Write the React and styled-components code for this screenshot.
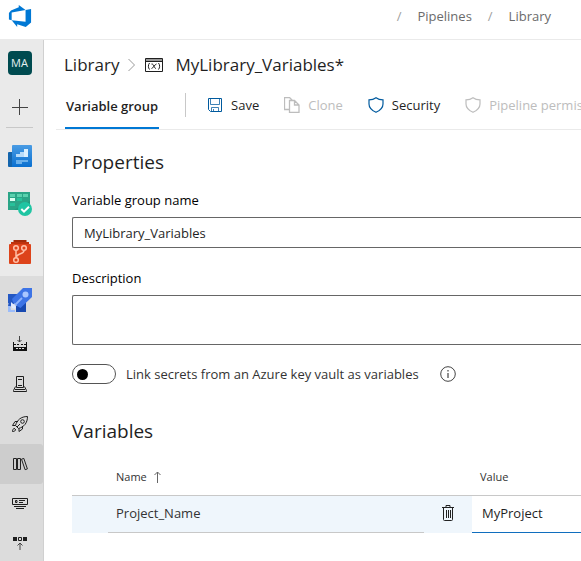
import React, { useState } from "react";
import styled, { createGlobalStyle, css } from "styled-components";

const GlobalStyle = createGlobalStyle`
  *, *::before, *::after { box-sizing: border-box; }
  html, body, #root { height: 100%; }
  body {
    margin: 0;
    overflow: hidden;
    background: #fff;
    color: #1f1f1f;
    font: 13px/20px "Open Sans", "Noto Sans", sans-serif;
  }
  button, input, textarea { font: inherit; color: inherit; }
  svg { display: block; flex: none; }
`;

const Page = styled.div`
  display: flex;
  flex-direction: column;
  height: 100%;
`;

const TopBar = styled.header`
  display: flex;
  align-items: center;
  justify-content: space-between;
  flex: none;
  height: 40px;
  padding: 0 30px 8px 8px;
  border-bottom: 1px solid #eaeaea;
`;

const HomeLink = styled.a`
  display: block;
`;

const Trail = styled.nav`
  display: flex;
  gap: 16px;
  color: #a0a0a0;
`;

const TrailLink = styled.a`
  color: #6b6b6b;
  text-decoration: none;
`;

const Body = styled.div`
  display: flex;
  flex: 1;
  min-height: 0;
`;

const Sidebar = styled.nav`
  display: flex;
  flex-direction: column;
  flex: none;
  width: 44px;
  overflow: hidden;
  background: #eaeaea;
  border-right: 1px solid #d0d0d0;
`;

const SideTop = styled.div`
  display: flex;
  flex-direction: column;
  align-items: center;
  margin: 0 10px 4px 6px;
  padding-top: 11px;
  border-bottom: 1px solid #c8c8c8;
`;

const ProjectBadge = styled.a`
  width: 24px;
  border-radius: 4px;
  background: #004b50;
  color: #e6f0f0;
  font-size: 11px;
  line-height: 24px;
  text-align: center;
  text-decoration: none;
`;

const AddButton = styled.button`
  display: grid;
  place-items: center;
  width: 24px;
  height: 41px;
  margin-top: 11px;
  padding: 0;
  border: 0;
  background: none;
`;

const SideItem = styled.a`
  display: grid;
  place-items: center;
  flex: none;
  height: ${(p) => (p.$sub ? 40 : 48)}px;
  padding-right: 4px;
  border-radius: 0 3px 3px 0;
  background: ${(p) => (p.$selected ? "#cdcdcd" : "transparent")};
`;

const SideGroup = styled.div`
  flex: 1 0 auto;
  background: #dcdcdc;
`;

const Main = styled.main`
  flex: 1;
  min-width: 0;
  overflow: hidden;
`;

const TitleRow = styled.div`
  display: flex;
  align-items: center;
  gap: 9px;
  height: 50px;
  padding-left: 20px;
  font-size: 17px;
  line-height: 24px;
  white-space: nowrap;
`;

const TitleLink = styled.a`
  color: inherit;
  text-decoration: none;
`;

const Title = styled.h1`
  margin: 0 0 0 3px;
  font: inherit;
`;

const CommandBar = styled.div`
  display: flex;
  align-items: flex-start;
  height: 40px;
  margin-left: 12px;
  padding-left: 9px;
  border-bottom: 1px solid #eaeaea;
`;

const Tab = styled.button`
  flex: none;
  height: 39px;
  padding: 0 1px 6px;
  border: 0;
  border-bottom: 2px solid #0078d4;
  background: none;
  font-weight: 600;
  line-height: 20px;
`;

const Divider = styled.span`
  flex: none;
  width: 1px;
  height: 24px;
  margin: 3px 13px 0 26px;
  background: #c8c8c8;
`;

const Command = styled.button`
  display: flex;
  align-items: center;
  flex: none;
  gap: 8px;
  height: 30px;
  margin-right: 9px;
  padding: 0 8px;
  border: 0;
  background: none;
  color: #1f1f1f;
  white-space: nowrap;
  svg { color: #005a9e; }
  &:disabled,
  &:disabled svg { color: #bdbdbd; }
`;

const Content = styled.div`
  padding: 20px 0 0 28px;
`;

const Heading = styled.h2`
  margin: 0;
  font-size: 19px;
  font-weight: 400;
  line-height: 24px;
`;

const Field = styled.div`
  display: flex;
  flex-direction: column;
  gap: 7px;
  margin-top: ${(p) => p.$space}px;
`;

const Label = styled.label`
  color: #000;
`;

const boxed = css`
  display: block;
  width: 100%;
  border: 1px solid #666;
  border-right: 0;
  border-radius: 2px 0 0 2px;
  background: #fff;
  outline: 0;
`;

const TextInput = styled.input`
  ${boxed}
  height: 31px;
  padding: 0 11px;
`;

const TextArea = styled.textarea`
  ${boxed}
  height: 50px;
  padding: 6px 11px;
  resize: none;
`;

const ToggleRow = styled.div`
  display: flex;
  align-items: center;
  gap: 10px;
  margin: 19px 0 35px;
  color: #333;
  white-space: nowrap;
`;

const Toggle = styled.input`
  appearance: none;
  display: flex;
  align-items: center;
  justify-content: ${(p) => (p.checked ? "flex-end" : "flex-start")};
  flex: none;
  width: 44px;
  height: 20px;
  margin: 0;
  padding: 0 4px;
  border: 1px solid #555;
  border-radius: 10px;
  &::before {
    content: "";
    width: 11px;
    height: 11px;
    border-radius: 50%;
    background: #000;
  }
`;

const InfoButton = styled.button`
  margin-left: 11px;
  padding: 0;
  border: 0;
  background: none;
`;

const Table = styled.table`
  width: 100%;
  margin-top: 14px;
  border-collapse: separate;
  border-spacing: 0;
  table-layout: fixed;
`;

const Column = styled.col`
  width: ${(p) => p.$width}px;
`;

const HeadCell = styled.th`
  height: 39px;
  padding: 2px 8px 0;
  border-bottom: 1px solid #c8c8c8;
  color: #333;
  font-size: 11px;
  font-weight: 400;
  line-height: 16px;
  text-align: left;
`;

const SortLabel = styled.span`
  display: flex;
  align-items: center;
  gap: 6px;
`;

const lines = { none: "#eff6fc", gray: "#c8c8c8", blue: "#106ebe" };

const Cell = styled.td`
  height: 37px;
  padding: 0 ${(p) => p.$pad ?? 8}px 2px;
  border-bottom: 1px solid ${(p) => lines[p.$line || "none"]};
  background: ${(p) => (p.$editing ? "#fff" : "#eff6fc")};
  color: #333;
`;

const DeleteButton = styled.button`
  display: grid;
  place-items: center;
  width: 100%;
  padding: 0;
  border: 0;
  background: none;
`;

const ValueInput = styled.input`
  display: block;
  width: 100%;
  height: 24px;
  padding: 0;
  border: 0;
  outline: 0;
  background: none;
  color: #1f1f1f;
`;

const Icon = ({ size = 16, box = 16, children, ...rest }) => (
  <svg width={size} height={size} viewBox={`0 0 ${box} ${box}`} fill="none" stroke="currentColor" aria-hidden="true" {...rest}>
    {children}
  </svg>
);

const DevOpsLogo = () => (
  <Icon size={24} box={26} stroke="none" fill="#0078d4">
    <path transform="translate(1 1)" d="M0 8.877L2.247 5.91l8.405-3.416V.022l7.37 5.393L2.966 8.338v8.225L0 15.707zm24-4.45v14.651l-5.753 4.9-9.303-3.057v3.056l-5.978-7.416 15.057 1.798V5.415z" />
  </Icon>
);

const BoardsOverviewIcon = () => (
  <Icon size={24} box={24} stroke="none">
    <defs>
      <linearGradient id="overview" x1="0" y1="0" x2="0" y2="1">
        <stop offset="0" stopColor="#4a9ce4" />
        <stop offset="1" stopColor="#0a70d0" />
      </linearGradient>
    </defs>
    <path d="M0 9q0-1 1-1h4v15H1q-1 0-1-1z" fill="#1465ad" />
    <path d="M5 1h18q1 0 1 1v20q0 1-1 1H4V2q0-1 1-1z" fill="url(#overview)" />
    <path d="M8 10h4V8h4V5h4v8H8z" fill="#b8dcfa" />
    <path d="M16 5h4v8h-4z" fill="#dcf0ff" />
    <path d="M8 16h12v2H8zM8 18h6v2H8z" fill="#6bb1ec" />
  </Icon>
);

const BoardsIcon = () => (
  <Icon size={24} box={24} stroke="none">
    <path d="M0 0h22v18H0z" fill="#229b7c" />
    <path d="M0 0h22v9L6 18H0z" fill="#2ba587" />
    <path d="M2 2h5v3H2zM9 2h5v3H9zM15 2h5v3h-5z" fill="#5ad1ae" />
    <path d="M2 6h5v3H2z" fill="#d8fff0" />
    <path d="M9 6h5v3H9zM2 11h5v3H2z" fill="#27c19a" />
    <circle cx="17" cy="17" r="7" fill="#20c5a3" />
    <path d="M13.3 17l2.7 2.7 5-5" stroke="#fff" strokeWidth="2" />
  </Icon>
);

const ReposIcon = () => (
  <Icon size={24} box={24} stroke="none">
    <path d="M5.500 0h13v3h-13z" fill="#a32b0a" />
    <path d="M3 2h18v4H3z" fill="#bf330d" />
    <rect x="1" y="4" width="22" height="20" rx="1" fill="#dd431a" />
    <g stroke="#ffc0a8" strokeWidth="1.500">
      <path d="M8 10.500v7M16 10.500c0 4-7 2.500-8 7" />
      <circle cx="8" cy="8" r="2.300" />
      <circle cx="16" cy="8" r="2.300" />
      <circle cx="8" cy="20" r="2.300" />
    </g>
  </Icon>
);

const PipelinesIcon = () => (
  <Icon size={24} box={24} stroke="none">
    <path d="M0 6h10L6 16l-6-1z" fill="#2458c4" />
    <path d="M8 18l10-4v10H8z" fill="#1749b0" />
    <path d="M15 0h9v9L12.500 20 9 18l-4-4-1-3z" fill="#3d74e6" />
    <circle cx="17.500" cy="6.500" r="3" fill="#a9c6ff" />
    <path d="M7 17l7-7" stroke="#8db2fb" strokeWidth="1.800" />
    <path d="M1 13h2l1 3-2 3-2-1z" fill="#2458c4" />
    <path d="M3 14l5 5-1 2-3-1-1-3z" fill="#dfeaff" />
    <path d="M0 18h2l1 4h4v2H0z" fill="#9bbcfa" />
  </Icon>
);

const PipelineBuildIcon = () => (
  <Icon>
    <path d="M7.500 0v6M5.500 4l2 2 2-2" stroke="#444" />
    <path d="M1 6h1v9H1zM14 6h1v9h-1zM2 11h12v4H2zM2 8h2v1H2zM5 8h2v1H5zM9 8h2v1H9zM12 8h2v1h-2z" fill="#111" stroke="none" />
    <path d="M4 12.500h2M7 12.500h2M10 12.500h2" stroke="#ddd" />
  </Icon>
);

const EnvironmentIcon = () => (
  <Icon stroke="#1f1f1f">
    <path d="M4.500.5h7v11h-7zM3.500 10.500l-2 4v1h13v-1l-2-4M6 3.500h4M6 9.500h4M3 13.500h10" />
  </Icon>
);

const ReleaseIcon = () => (
  <Icon size={18} box={18} stroke="#1f1f1f">
    <path d="M4.500 10.500C6 5 10 1.500 16.500 1.500c0 6.500-3.500 10.500-9 12zM7 6.500H4l-2.500 4h3M11.500 11v3L8 16.500v-3M4 13.500c-2 0-2.500 1-2.500 3 2 0 3-.5 3-2.500M6 12l3-3" />
    <circle cx="11.500" cy="6.500" r="1.800" />
  </Icon>
);

const LibraryIcon = () => (
  <Icon stroke="#222">
    <path d="M1.500 2.500h3v11h-3zM5.500 2.500h3v11h-3zM9.500 3.200l2.300-.8 3.600 10.500-2.300.8z" />
  </Icon>
);

const TaskGroupIcon = () => (
  <Icon stroke="#1f1f1f">
    <path d="M.5 2.500h15v6H.5z" />
    <path d="M3.500 4.500h1.500v2H3.500zM7 4.500h6M7 6.500h4M2 10.500h12M4 12.500h8" />
  </Icon>
);

const DeploymentGroupIcon = () => (
  <Icon stroke="#1f1f1f">
    <path d="M1 1h4v4H1zM11 1h4v4h-4z" fill="#1f1f1f" stroke="none" />
    <path d="M6.500 1.500h3v3h-3z" />
    <path d="M8 14V7.500M5.500 9.500L8 7l2.500 2.500" stroke="#444" />
  </Icon>
);

const VariableGroupIcon = () => (
  <svg width="18" height="16" viewBox="0 0 18 16" fill="none" stroke="#1f1f1f" aria-hidden="true">
    <path d="M1 2h16v2H1z" fill="#999" stroke="none" />
    <path d="M.5 1.500h17v13H.5zM.5 4.500h17" />
    <path d="M4.500 6c-1.500 2-1.500 4.500 0 6.500M13.500 6c1.500 2 1.500 4.500 0 6.500M6.500 7c2.500-.5 2 4 4.500 4.500M11.500 7c-1.500 0-3.500 4.500-5 4.500" />
  </svg>
);

const SaveIcon = () => (
  <Icon>
    <path d="M3.500 1.500v6h9v-6M4.500 14.500v-4h7v4M6.500 12v2.500" opacity=".75" />
    <path d="M1.500 1.500h13v13h-11l-2-2z" />
  </Icon>
);

const CloneIcon = () => (
  <Icon strokeWidth="1.300">
    <path d="M5.500 12.500h-5V.5h5l3 3M5.500 3.500h5l4.500 4.500v7.500H5.500zM10.500 3.500V8H15" />
  </Icon>
);

const ShieldIcon = () => (
  <Icon strokeWidth="1.200">
    <path d="M8 .8C6 2.300 3.500 2.900 1 2.900V7c0 4 3 6.500 7 8.300C12 13.500 15 11 15 7V2.900C12.500 2.900 10 2.300 8 .8z" />
  </Icon>
);

const InfoIcon = () => (
  <Icon stroke="#444">
    <circle cx="8" cy="8" r="7.300" />
    <path d="M8 7v5M8 4v1.500" strokeWidth="1.200" />
  </Icon>
);

const TrashIcon = () => (
  <Icon stroke="#222">
    <path d="M2 2.500h12M6 2V.5h4V2M3.500 2.500v12q0 1 1 1h7q1 0 1-1v-12M6.500 5v8M8.500 5v8M10.500 5v8" />
  </Icon>
);

const ChevronIcon = () => (
  <svg width="8" height="14" viewBox="0 0 8 14" fill="none" stroke="#999" aria-hidden="true">
    <path d="M.5 1L6.500 7l-6 6" />
  </svg>
);

const SortIcon = () => (
  <svg width="8" height="12" viewBox="0 0 8 12" fill="none" stroke="#666" aria-hidden="true">
    <path d="M4.500 12V1M1.500 4l3-3 3 3" />
  </svg>
);

const services = [
  ["Overview", BoardsOverviewIcon],
  ["Boards", BoardsIcon],
  ["Repos", ReposIcon],
];

const pipelineItems = [
  ["Builds", PipelineBuildIcon],
  ["Environments", EnvironmentIcon],
  ["Releases", ReleaseIcon],
  ["Library", LibraryIcon],
  ["Task groups", TaskGroupIcon],
  ["Deployment groups", DeploymentGroupIcon],
];

const commands = [
  { label: "Save", Glyph: SaveIcon },
  { label: "Clone", Glyph: CloneIcon, disabled: true },
  { label: "Security", Glyph: ShieldIcon },
  { label: "Pipeline permissions", Glyph: ShieldIcon, disabled: true },
];

export default function App() {
  const [name, setName] = useState("MyLibrary_Variables");
  const [description, setDescription] = useState("");
  const [linked, setLinked] = useState(false);
  const [value, setValue] = useState("MyProject");

  return (
    <Page>
      <GlobalStyle />
      <TopBar>
        <HomeLink href="#" aria-label="Azure DevOps"><DevOpsLogo /></HomeLink>
        <Trail aria-label="Breadcrumb">
          <span>/</span>
          <TrailLink href="#">Pipelines</TrailLink>
          <span>/</span>
          <TrailLink href="#">Library</TrailLink>
        </Trail>
      </TopBar>
      <Body>
        <Sidebar aria-label="Project">
          <SideTop>
            <ProjectBadge href="#">MA</ProjectBadge>
            <AddButton aria-label="Add">
              <Icon stroke="#444"><path d="M7.500 0v16M0 8.500h16" /></Icon>
            </AddButton>
          </SideTop>
          {services.map(([label, Glyph]) => (
            <SideItem key={label} href="#" aria-label={label}><Glyph /></SideItem>
          ))}
          <SideGroup>
            <SideItem href="#" aria-label="Pipelines"><PipelinesIcon /></SideItem>
            {pipelineItems.map(([label, Glyph]) => (
              <SideItem key={label} href="#" aria-label={label} $sub $selected={label === "Library"}>
                <Glyph />
              </SideItem>
            ))}
          </SideGroup>
        </Sidebar>
        <Main>
          <TitleRow>
            <TitleLink href="#">Library</TitleLink>
            <ChevronIcon />
            <VariableGroupIcon />
            <Title>MyLibrary_Variables*</Title>
          </TitleRow>
          <CommandBar>
            <Tab>Variable group</Tab>
            <Divider />
            {commands.map(({ label, Glyph, disabled }) => (
              <Command key={label} disabled={disabled}><Glyph />{label}</Command>
            ))}
          </CommandBar>
          <Content>
            <Heading>Properties</Heading>
            <Field $space={16}>
              <Label htmlFor="group-name">Variable group name</Label>
              <TextInput id="group-name" value={name} onChange={(e) => setName(e.target.value)} />
            </Field>
            <Field $space={20}>
              <Label htmlFor="description">Description</Label>
              <TextArea id="description" value={description} onChange={(e) => setDescription(e.target.value)} />
            </Field>
            <ToggleRow>
              <Toggle id="link" type="checkbox" role="switch" checked={linked} onChange={(e) => setLinked(e.target.checked)} />
              <label htmlFor="link">Link secrets from an Azure key vault as variables</label>
              <InfoButton aria-label="More information"><InfoIcon /></InfoButton>
            </ToggleRow>
            <Heading>Variables</Heading>
            <Table>
              <colgroup>
                <Column $width={36} />
                <Column $width={316} />
                <Column $width={48} />
                <col />
              </colgroup>
              <thead>
                <tr>
                  <HeadCell />
                  <HeadCell scope="col" aria-sort="ascending"><SortLabel>Name <SortIcon /></SortLabel></HeadCell>
                  <HeadCell />
                  <HeadCell scope="col">Value</HeadCell>
                </tr>
              </thead>
              <tbody>
                <tr>
                  <Cell />
                  <Cell $line="gray">Project_Name</Cell>
                  <Cell><DeleteButton aria-label="Delete variable"><TrashIcon /></DeleteButton></Cell>
                  <Cell $line="blue" $pad={10} $editing>
                    <ValueInput aria-label="Value" value={value} onChange={(e) => setValue(e.target.value)} />
                  </Cell>
                </tr>
              </tbody>
            </Table>
          </Content>
        </Main>
      </Body>
    </Page>
  );
}
